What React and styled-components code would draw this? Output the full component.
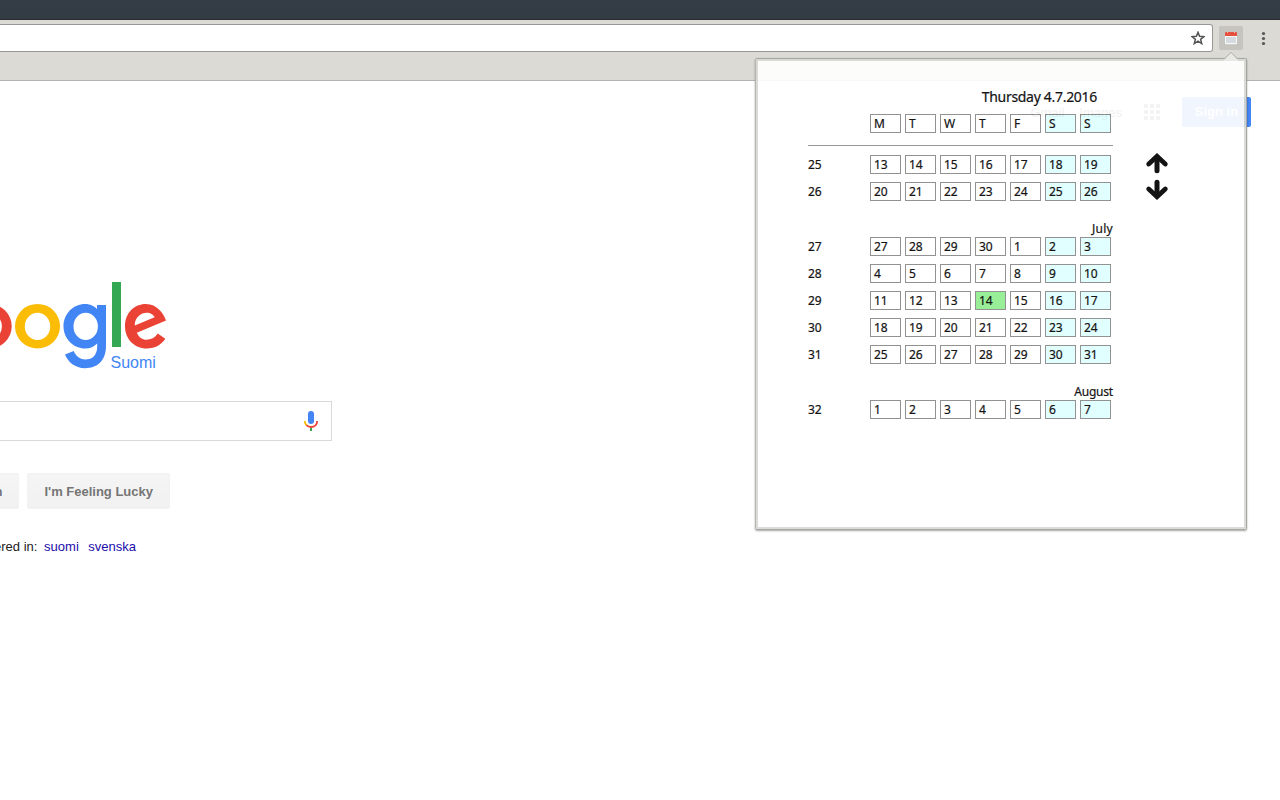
import React from "react";
import styled, { createGlobalStyle } from "styled-components";

const GlobalStyle = createGlobalStyle`
  * { box-sizing: border-box; }
  body { margin: 0; background: #fff; overflow: hidden; font-family: "Liberation Sans", Arial, sans-serif; }
`;

const Screen = styled.div`
  position: relative;
  width: 1280px;
  height: 800px;
  overflow: hidden;
  background: #fff;
`;

const TitleBar = styled.div`
  height: 20px;
  background: linear-gradient(#343d46, #333b43);
  border-bottom: 1px solid #2b2a33;
`;

const Toolbar = styled.div`
  display: flex;
  align-items: flex-start;
  height: 61px;
  padding-top: 4px;
  background: #dbdad5;
  border-bottom: 1px solid #b4b4b1;
`;

const AddressBar = styled.div`
  display: flex;
  align-items: center;
  justify-content: flex-end;
  width: 1213px;
  height: 28px;
  padding-right: 7px;
  background: #fff;
  border: 1px solid #979893;
  border-left: 0;
  border-radius: 0 3px 3px 0;
`;

const ExtensionButton = styled.div`
  display: flex;
  width: 24px;
  height: 24px;
  margin: 2px 0 0 6px;
  background: #c5c4be;
  border-radius: 2px;
`;

const MenuIcon = styled.svg`
  margin: 6px 0 0 17px;
`;

const Page = styled.main`
  display: flex;
  flex-direction: column;
`;

const Nav = styled.nav`
  display: flex;
  align-items: center;
  justify-content: flex-end;
  height: 30px;
  margin-top: 16px;
  padding-right: 29px;
  font-size: 13px;
  color: #404040;
`;

const NavLink = styled.span`
  margin-right: 15px;
`;

const AppsIcon = styled.svg`
  margin: 0 22px 0 7px;
`;

const SignIn = styled.div`
  width: 69px;
  height: 30px;
  line-height: 30px;
  text-align: center;
  font-weight: bold;
  color: #fff;
  background: #4285f4;
  border-radius: 2px;
`;

const Brand = styled.div`
  display: flex;
  flex-direction: column;
  width: 168px;
  height: 120px;
  margin-top: 153px;
`;

const Region = styled.div`
  margin: -17px 0 0 110.5px;
  font-size: 16px;
  line-height: 20px;
  color: #4285f4;
`;

const SearchBox = styled.div`
  display: flex;
  align-items: center;
  justify-content: flex-end;
  width: 332px;
  height: 40px;
  margin-top: 1px;
  padding-right: 12px;
  border: 1px solid #d9d9d9;
  border-left: 0;
`;

const Buttons = styled.div`
  display: flex;
  justify-content: flex-end;
  gap: 8px;
  width: 170px;
  margin-top: 32px;
`;

const SearchButton = styled.div`
  flex: none;
  height: 36px;
  padding: 0 16px;
  border: 1px solid #f2f2f2;
  border-radius: 2px;
  background: linear-gradient(#f5f5f5, #f1f1f1);
  color: #757575;
  font-size: 13px;
  font-weight: bold;
  line-height: 35px;
  white-space: nowrap;
`;

const Languages = styled.div`
  display: flex;
  justify-content: flex-end;
  width: 136px;
  margin-top: 30px;
  font-size: 13px;
  line-height: 15px;
  color: #222;
  white-space: nowrap;
`;

const Language = styled.span`
  margin-left: ${(p) => p.$gap}px;
  color: #1a0dab;
`;

const Popup = styled.section`
  position: absolute;
  left: 755px;
  top: 58px;
  width: 492px;
  height: 472px;
  border: 1px solid #a6a6a2;
  border-left-color: #b4b4b0;
  border-radius: 2px;
  box-shadow: 0 1px 2px rgba(0, 0, 0, 0.35);
`;

const PopupBody = styled.div`
  height: 470px;
  border: 2px solid #d9d9d4;
  background: #fff;
  opacity: 0.92;
  display: flex;
  align-items: flex-start;
  padding: 26px 0 0 50px;
  font-family: "Noto Sans", "Open Sans", sans-serif;
  color: #000;
  -webkit-text-stroke: 0.2px #000;
`;

const PopupArrow = styled.svg`
  position: absolute;
  left: 467px;
  top: -8px;
`;

const Calendar = styled.div`
  width: 305px;
  font-size: 12px;
`;

const DateTitle = styled.div`
  height: 20px;
  padding-right: 16px;
  text-align: right;
  font-size: 14px;
  line-height: 19px;
  letter-spacing: -0.3px;
`;

const Week = styled.div`
  display: grid;
  grid-template-columns: 58px repeat(7, 31px);
  column-gap: 4px;
  width: 307px;
  height: 19px;
  margin-bottom: 8px;
`;

const WeekNumber = styled.div`
  line-height: 19px;
`;

const Day = styled.div`
  height: 19px;
  padding-left: 3px;
  border: 1px solid #898989;
  line-height: 17px;
  letter-spacing: -0.15px;
  background: ${(p) => (p.$today ? "#90ee90" : p.$weekend ? "#e0ffff" : "transparent")};
`;

const Header = styled.div`
  height: 48px;
  padding-top: 7px;
`;

const Rule = styled.div`
  width: 305px;
  height: 1px;
  margin-top: 12px;
  background: #909092;
`;

const Month = styled.div`
  height: 28px;
  padding-top: 11px;
  text-align: right;
  line-height: 17px;
  letter-spacing: ${(p) => p.$spacing}px;
`;

const Controls = styled.div`
  display: flex;
  flex-direction: column;
  gap: 5px;
  margin: 65px 0 0 32px;
`;

const month = (rows) => rows.map(([n, days]) => (
  <Week key={n}>
    <WeekNumber>{n}</WeekNumber>
    {days.map((d, i) => (
      <Day key={i} $weekend={i > 4} $today={n === 29 && d === 14}>{d}</Day>
    ))}
  </Week>
));

const span = (start) => Array.from({ length: 7 }, (_, i) => start + i);

const june = [[25, span(13)], [26, span(20)]];
const july = [
  [27, [27, 28, 29, 30, 1, 2, 3]],
  [28, span(4)],
  [29, span(11)],
  [30, span(18)],
  [31, span(25)],
];
const august = [[32, span(1)]];

const Arrow = ({ down }) => (
  <svg width="24" height="22" viewBox="0 0 24 22">
    <g transform={down ? "rotate(180 12 11)" : undefined} fill="none" stroke="#000" strokeWidth="4.8" strokeLinecap="round" strokeLinejoin="miter">
      <path d="M3.700 12 L12 4.300 L20.300 12" />
      <path d="M12 5.500 V18.700" strokeWidth="5" />
    </g>
  </svg>
);

const Logo = () => (
  <svg width="168" height="90" viewBox="0 280 168 90">
    <ellipse cx="-10.8" cy="326.2" rx="22.5" ry="22.3" fill="#ea4335" />
    <ellipse cx="-10.8" cy="326.4" rx="12.7" ry="13.6" fill="#fff" />
    <ellipse cx="37.5" cy="326.2" rx="22.5" ry="22.3" fill="#fbbc05" />
    <ellipse cx="37.5" cy="326.4" rx="12.7" ry="13.6" fill="#fff" />
    <path fill="#4285f4" d="M97 305h9v41c0 15-9 22.2-21 22.2c-10 0-17-6.2-20-13.7l8.7-3.5c2 4.5 6 8.5 11.500 8.500c7.500 0 12-4.500 12-13v-3c-3 3-7 5-12 5c-11.700 0-21.700-9.700-21.700-22.300S73.500 304 85.200 304c5 0 9.300 2.300 11.800 5z" />
    <ellipse cx="85.7" cy="326.4" rx="12.2" ry="13.6" fill="#fff" />
    <rect x="112" y="282" width="9" height="65" fill="#34a853" />
    <path fill="#ea4335" fillRule="evenodd" d="M146.500 339.700c4.500 0 8.500-2 11.300-6.200l7.500 5.200c-3.500 5.500-9.800 9.800-18.800 9.800c-12 0-21.500-9.500-21.500-22.300c0-13.300 9.300-22.200 20.800-22.200c11.500 0 17.700 9.500 20.200 16.600l-29.200 12.100c2 4.500 5.500 7 9.700 7zM134.800 325.500l19.800-8.200c-1-2.700-4.300-4.500-8-4.500c-5 0-12.100 4.200-11.800 12.700z" />
  </svg>
);

export default function App() {
  return (
    <Screen>
      <GlobalStyle />
      <TitleBar />
      <Toolbar>
        <AddressBar>
          <svg width="14" height="14" viewBox="0 0 14 14">
            <path d="M7 1.300 L8.600 5.300 L12.900 5.600 L9.600 8.300 L10.700 12.600 L7 10.200 L3.300 12.600 L4.400 8.300 L1.100 5.600 L5.400 5.300 Z" fill="none" stroke="#555" strokeWidth="1.500" />
          </svg>
        </AddressBar>
        <ExtensionButton>
          <svg width="24" height="24" viewBox="0 0 24 24">
            <rect x="6" y="8" width="12" height="10.300" rx="1" fill="#f4f8fb" />
            <rect x="7" y="11" width="10" height="6" fill="#d5dade" />
            <path d="M6 10V7a1 1 0 0 1 1-1h10a1 1 0 0 1 1 1v3z" fill="#e5503f" />
            <path d="M8.500 5.500v1.500M15.500 5.500v1.500" stroke="#f5b5a9" />
          </svg>
        </ExtensionButton>
        <MenuIcon width="8" height="16" viewBox="0 0 8 16" fill="#555">
          <circle cx="3.500" cy="3.500" r="1.600" />
          <circle cx="3.500" cy="8.500" r="1.600" />
          <circle cx="3.500" cy="13.500" r="1.600" />
        </MenuIcon>
      </Toolbar>

      <Page>
        <Nav>
          <NavLink>Gmail</NavLink>
          <NavLink>Images</NavLink>
          <AppsIcon width="16" height="16" viewBox="0 0 16 16" fill="#777">
            {[0, 6, 12].map((y) => [0, 6, 12].map((x) => (
              <rect key={`${x}-${y}`} x={x} y={y} width="4" height="4" />
            )))}
          </AppsIcon>
          <SignIn>Sign in</SignIn>
        </Nav>
        <Brand>
          <Logo />
          <Region>Suomi</Region>
        </Brand>
        <SearchBox>
          <svg width="16" height="22" viewBox="0 0 16 22" fill="none">
            <rect x="5" y="1" width="6" height="13" rx="3" fill="#4285f4" />
            <path d="M1.800 11c0 1.800.7 3.300 1.800 4.300" stroke="#fbbc05" strokeWidth="1.800" />
            <path d="M3.500 15.200C4.600 16.400 6.100 17 8 17c3.600 0 6.200-2.500 6.200-6" stroke="#ea4335" strokeWidth="1.800" />
            <path d="M8 18v3" stroke="#34a853" strokeWidth="2" />
          </svg>
        </SearchBox>
        <Buttons>
          <SearchButton>Google Search</SearchButton>
          <SearchButton>I'm Feeling Lucky</SearchButton>
        </Buttons>
        <Languages>
          Google.fi offered in:
          <Language $gap={6.7}>suomi</Language>
          <Language $gap={9.5}>svenska</Language>
        </Languages>
      </Page>

      <Popup>
        <PopupBody>
          <Calendar>
            <DateTitle>Thursday 4.7.2016</DateTitle>
            <Header>
              <Week>
                <WeekNumber />
                {["M", "T", "W", "T", "F", "S", "S"].map((d, i) => (
                  <Day key={i} $weekend={i > 4}>{d}</Day>
                ))}
              </Week>
              <Rule />
            </Header>
            <div>
              {month(june)}
              <Month $spacing={0.25}>July</Month>
              {month(july)}
              <Month $spacing={-0.2}>August</Month>
              {month(august)}
            </div>
          </Calendar>
          <Controls>
            <Arrow />
            <Arrow down />
          </Controls>
        </PopupBody>
        <PopupArrow width="16" height="10" viewBox="0 0 16 10">
          <path d="M1 9L8 1.500L15 9V10H1z" fill="#e8e8e5" />
          <path d="M1 8L8 1.500L15 8" fill="none" stroke="#b0b0ac" />
        </PopupArrow>
      </Popup>
    </Screen>
  );
}
